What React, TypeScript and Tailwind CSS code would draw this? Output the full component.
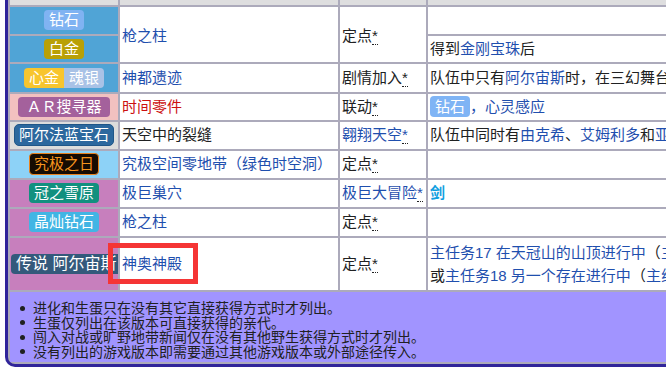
import React from "react";

const L = ({ children }: { children: React.ReactNode }) => (
  <span className="text-[#1f4fae]">{children}</span>
);

const Star = ({ blue }: { blue?: boolean }) => (
  <span className={`border-b border-dotted border-[#202122] ${blue ? "text-[#1f4fae]" : ""}`}>*</span>
);

const Badge = ({ cls, children }: { cls: string; children: React.ReactNode }) => (
  <span className={`inline-block rounded-[4px] px-[5px] leading-[20px] text-white ${cls}`}>{children}</span>
);

const c1 = "p-0 text-center align-middle";
const c = "px-[2px] py-0 align-middle bg-white whitespace-nowrap overflow-hidden";

export default function App() {
  return (
    <div className="w-[666px] h-[373px] overflow-hidden bg-white font-['Liberation_Sans','Noto_Sans_CJK_SC',sans-serif] text-[15px] text-[#202122]">
      <div className="-mt-[10px] ml-[5px] w-[985px] overflow-hidden rounded-bl-[10px] border-b-[3px] border-l-[3px] border-[#30249a] bg-[#acaabb]">
        <table className="w-[982px] table-fixed border-separate border-spacing-[2px]">
          <colgroup>
            <col className="w-[108px]" />
            <col className="w-[218px]" />
            <col className="w-[86px]" />
            <col className="w-[560px]" />
          </colgroup>
          <tbody>
            <tr className="h-[13px]">
              <td className="bg-[#dededf] p-0"></td>
              <td className="bg-[#dededf] p-0"></td>
              <td className="bg-[#dededf] p-0"></td>
              <td className="bg-[#dededf] p-0"></td>
            </tr>
            <tr className="h-[27px]">
              <td className={`${c1} bg-[#50a4d6]`}>
                <Badge cls="bg-[#80b3f2]">钻石</Badge>
              </td>
              <td rowSpan={2} className={`${c} pt-[4px]`}><L>枪之柱</L></td>
              <td rowSpan={2} className={`${c} pt-[4px]`}>定点<Star /></td>
              <td className={c}></td>
            </tr>
            <tr className="h-[26px]">
              <td className={`${c1} bg-[#50a4d6]`}>
                <Badge cls="bg-[#b9a006]">白金</Badge>
              </td>
              <td className={c}>得到<L>金刚宝珠</L>后</td>
            </tr>
            <tr className="h-[28px]">
              <td className={`${c1} bg-[#50a4d6]`}>
                <span className="inline-flex">
                  <Badge cls="bg-[#f8c52e] rounded-r-none">心金</Badge>
                  <Badge cls="bg-[#a9c2e6] rounded-l-none">魂银</Badge>
                </span>
              </td>
              <td className={c}><L>神都遗迹</L></td>
              <td className={c}>剧情加入<Star /></td>
              <td className={c}>队伍中只有<L>阿尔宙斯</L>时，在三幻舞台吹响天界之笛</td>
            </tr>
            <tr className="h-[26px]">
              <td className={`${c1} bg-[#f2c1c0]`}>
                <Badge cls="bg-[#a4619c] px-[8px]">ＡＲ搜寻器</Badge>
              </td>
              <td className={c}><span className="text-[#cc1010]">时间零件</span></td>
              <td className={c}>联动<Star /></td>
              <td className={c}>
                <Badge cls="bg-[#7fb4f5] leading-[21px]">钻石</Badge>
                <L>，心灵感应</L>
              </td>
            </tr>
            <tr className="h-[27px]">
              <td className={`${c1} bg-[#dcdcdc]`}>
                <span className="inline-block rounded-[5px] border border-[#1f5688] bg-[#2c689e] px-[4px] leading-[20px] text-white">阿尔法蓝宝石</span>
              </td>
              <td className={c}>天空中的裂缝</td>
              <td className={c}><L>翱翔天空</L><Star blue /></td>
              <td className={c}>队伍中同时有<L>由克希</L>、<L>艾姆利多</L>和<L>亚克诺姆</L></td>
            </tr>
            <tr className="h-[27px]">
              <td className={`${c1} bg-[#8dd2f7]`}>
                <span className="inline-block rounded-[4px] border border-[#e8821e] bg-[#160c02] px-[4px] leading-[20px] text-[#f7941d]">究极之日</span>
              </td>
              <td className={c}><L>究极空间零地带（绿色时空洞）</L></td>
              <td className={c}>定点<Star /></td>
              <td className={c}></td>
            </tr>
            <tr className="h-[27px]">
              <td className={`${c1} bg-[#c77fbd]`}>
                <Badge cls="bg-[#12907f]">冠之雪原</Badge>
              </td>
              <td className={c}><L>极巨巢穴</L></td>
              <td className={c}><L>极巨大冒险</L><Star blue /></td>
              <td className={c}><span className="font-bold text-[#0f9ee0]">剑</span></td>
            </tr>
            <tr className="h-[27px]">
              <td className={`${c1} bg-[#c77fbd]`}>
                <Badge cls="bg-[#41b5e4]">晶灿钻石</Badge>
              </td>
              <td className={c}><L>枪之柱</L></td>
              <td className={c}>定点<Star /></td>
              <td className={c}></td>
            </tr>
            <tr className="h-[52px]">
              <td className="overflow-hidden whitespace-nowrap bg-[#c77fbd] p-0 pl-[1px] text-left align-middle">
                <span className="inline-block rounded-[4px] bg-[#34597b] px-[5px] text-[16px] leading-[20px] text-white">传说 阿尔宙斯</span>
              </td>
              <td className={`${c} relative overflow-visible`}>
                <L>神奥神殿</L>
                <span className="absolute left-[-12px] top-[5px] h-[41px] w-[90px] border-[5px] border-[#f53535]"></span>
              </td>
              <td className={c}>定点<Star /></td>
              <td className={`${c} leading-[23px]`}>
                <div><L>主任务17 在天冠山的山顶进行中</L>（<L>主线</L>）</div>
                <div>或<L>主任务18 另一个存在进行中</L>（<L>主线</L>）</div>
              </td>
            </tr>
            <tr className="h-[70px]">
              <td colSpan={4} className="bg-[#a194ff] p-0 align-top">
                <ul className="pt-[9px] text-[14px] leading-[14.5px]">
                  {[
                    "进化和生蛋只在没有其它直接获得方式时才列出。",
                    "生蛋仅列出在该版本可直接获得的亲代。",
                    "闯入对战或旷野地带新闻仅在没有其他野生获得方式时才列出。",
                    "没有列出的游戏版本即需要通过其他游戏版本或外部途径传入。",
                  ].map((t) => (
                    <li key={t} className="flex items-center">
                      <span className="ml-[10px] mr-[8px] inline-block h-[5px] w-[5px] rounded-full bg-[#202122]"></span>
                      <span>{t}</span>
                    </li>
                  ))}
                </ul>
              </td>
            </tr>
          </tbody>
        </table>
      </div>
    </div>
  );
}
